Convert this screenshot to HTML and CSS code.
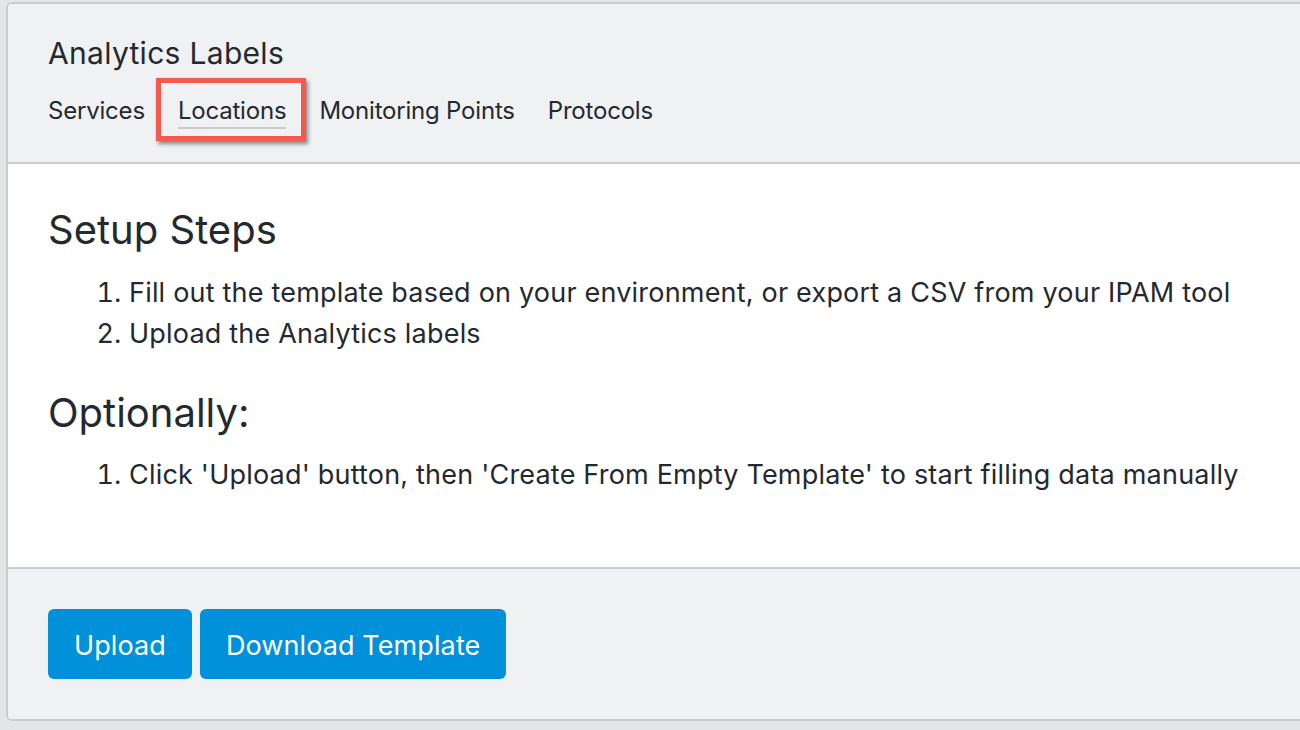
FILE: index.html
```html
<!DOCTYPE html>
<html lang="en">
<head>
<meta charset="utf-8">
<title>Analytics Labels</title>
<link rel="stylesheet" href="styles.css">
</head>
<body>
<div class="card">
  <div class="card-header">
    <h1 class="title">Analytics Labels</h1>
    <nav class="tabs">
      <span class="tab">Services</span>
      <span class="tab tab-active">Locations<span class="highlight"></span></span>
      <span class="tab">Monitoring Points</span>
      <span class="tab">Protocols</span>
    </nav>
  </div>
  <div class="card-body">
    <h2 class="section-title">Setup Steps</h2>
    <ol class="steps">
      <li>Fill out the template based on your environment, or export a CSV from your IPAM tool</li>
      <li>Upload the Analytics labels</li>
    </ol>
    <h2 class="section-title">Optionally:</h2>
    <ol class="steps steps-last">
      <li>Click 'Upload' button, then 'Create From Empty Template' to start filling data manually</li>
    </ol>
  </div>
  <div class="card-footer">
    <button class="btn">Upload</button>
    <button class="btn">Download Template</button>
  </div>
</div>
</body>
</html>
```
FILE: styles.css
```css
html, body {
  margin: 0;
  padding: 0;
}
body {
  background: #e4e5e7;
  font-family: Inter, "Noto Sans", sans-serif;
  color: #24292f;
  height: 730px;
  overflow: hidden;
}
.card {
  margin: 2px -40px 0 6px;
  border: 2px solid #c9cdd3;
  border-radius: 6px;
  background: #ffffff;
}
.card-header {
  background: #f0f1f3;
  padding: 31px 40px 33px;
  border-bottom: 2px solid #c9cdd3;
  border-radius: 5px 5px 0 0;
}
.title {
  margin: 0 0 25px;
  font-size: 30px;
  line-height: 36px;
  font-weight: 400;
  letter-spacing: 0.3px;
}
.tabs {
  display: flex;
  gap: 33px;
  font-size: 24px;
  line-height: 29px;
  letter-spacing: -0.2px;
}
.tab {
  position: relative;
  padding-bottom: 2px;
  border-bottom: 2px solid transparent;
}
.tab-active {
  border-bottom-color: #c9cdd3;
}
.highlight {
  position: absolute;
  left: -22px;
  right: -20px;
  top: -18px;
  bottom: -14px;
  border: 5px solid #f4594d;
  box-shadow: 2px 3px 4px rgba(0, 0, 0, 0.45);
}
.card-body {
  padding: 43px 40px 71px;
}
.section-title {
  margin: 0 0 19px;
  font-size: 40px;
  line-height: 45.6px;
  font-weight: 400;
}
.steps {
  margin: 0 0 35px;
  padding-left: 81px;
  font-size: 27px;
  line-height: 41.6px;
  letter-spacing: 0.2px;
}
.steps-last {
  margin-bottom: 0;
}
.card-footer {
  background: #f0f1f3;
  border-top: 2px solid #c9cdd3;
  padding: 40px;
  display: flex;
  gap: 8px;
  border-radius: 0 0 5px 5px;
}
.btn {
  height: 70px;
  padding: 3px 26px 0 26px;
  border: none;
  border-radius: 6px;
  background: #0091da;
  color: #ffffff;
  font-family: Inter, "Noto Sans", sans-serif;
  font-size: 27px;
  letter-spacing: 0.1px;
}
```
